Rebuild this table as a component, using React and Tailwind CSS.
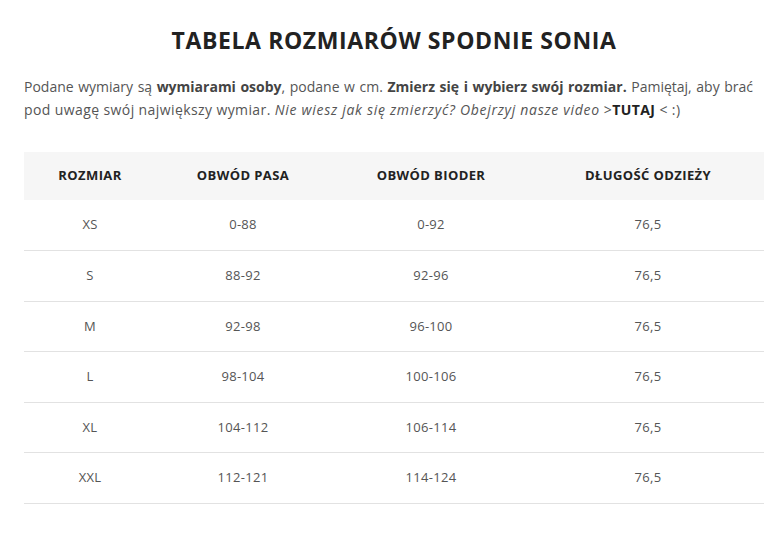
import React from 'react';

const rows = [
  ['XS', '0-88', '0-92', '76,5'],
  ['S', '88-92', '92-96', '76,5'],
  ['M', '92-98', '96-100', '76,5'],
  ['L', '98-104', '100-106', '76,5'],
  ['XL', '104-112', '106-114', '76,5'],
  ['XXL', '112-121', '114-124', '76,5'],
];

export default function App() {
  return (
    <div className="bg-white w-[784px] min-h-[540px] px-[24px] pt-[24px] font-['Open_Sans',sans-serif] text-[#555]">
      <h1 className="pl-[4px] text-center text-[23px] leading-[32px] font-bold tracking-[0.6px] text-[#222]">
        TABELA ROZMIARÓW SPODNIE SONIA
      </h1>

      <div className="mt-[19px] text-[14px] leading-[23px]">
        <p className="pr-[7px] text-justify [text-align-last:justify]">
          Podane wymiary są <strong className="text-[#444]">wymiarami osoby</strong>, podane w cm.{' '}
          <strong className="text-[#444]">Zmierz się i wybierz swój rozmiar.</strong> Pamiętaj, aby brać
        </p>
        <p className="tracking-[0.4px] whitespace-nowrap">
          pod uwagę swój największy wymiar.{' '}
          <em className="tracking-[0.7px]">Nie wiesz jak się zmierzyć? Obejrzyj nasze video</em> &gt;
          <strong className="text-[#222]">TUTAJ</strong> &lt; :)
        </p>
      </div>

      <table className="mt-[31px] w-[740px] border-collapse text-[13px]">
        <thead>
          <tr className="bg-[#f6f6f6] h-[48px] text-[#222]">
            <th className="w-[132px] font-bold tracking-[0.4px]">ROZMIAR</th>
            <th className="w-[174px] font-bold tracking-[0.4px]">OBWÓD PASA</th>
            <th className="w-[202px] font-bold tracking-[0.4px]">OBWÓD BIODER</th>
            <th className="font-bold tracking-[0.4px]">DŁUGOŚĆ ODZIEŻY</th>
          </tr>
        </thead>
        <tbody>
          {rows.map((r) => (
            <tr key={r[0]} className="h-[50.5px] border-b border-[#e2e2e2]">
              {r.map((c, i) => (
                <td key={i} className="text-center tracking-[0.3px]">{c}</td>
              ))}
            </tr>
          ))}
        </tbody>
      </table>
    </div>
  );
}
